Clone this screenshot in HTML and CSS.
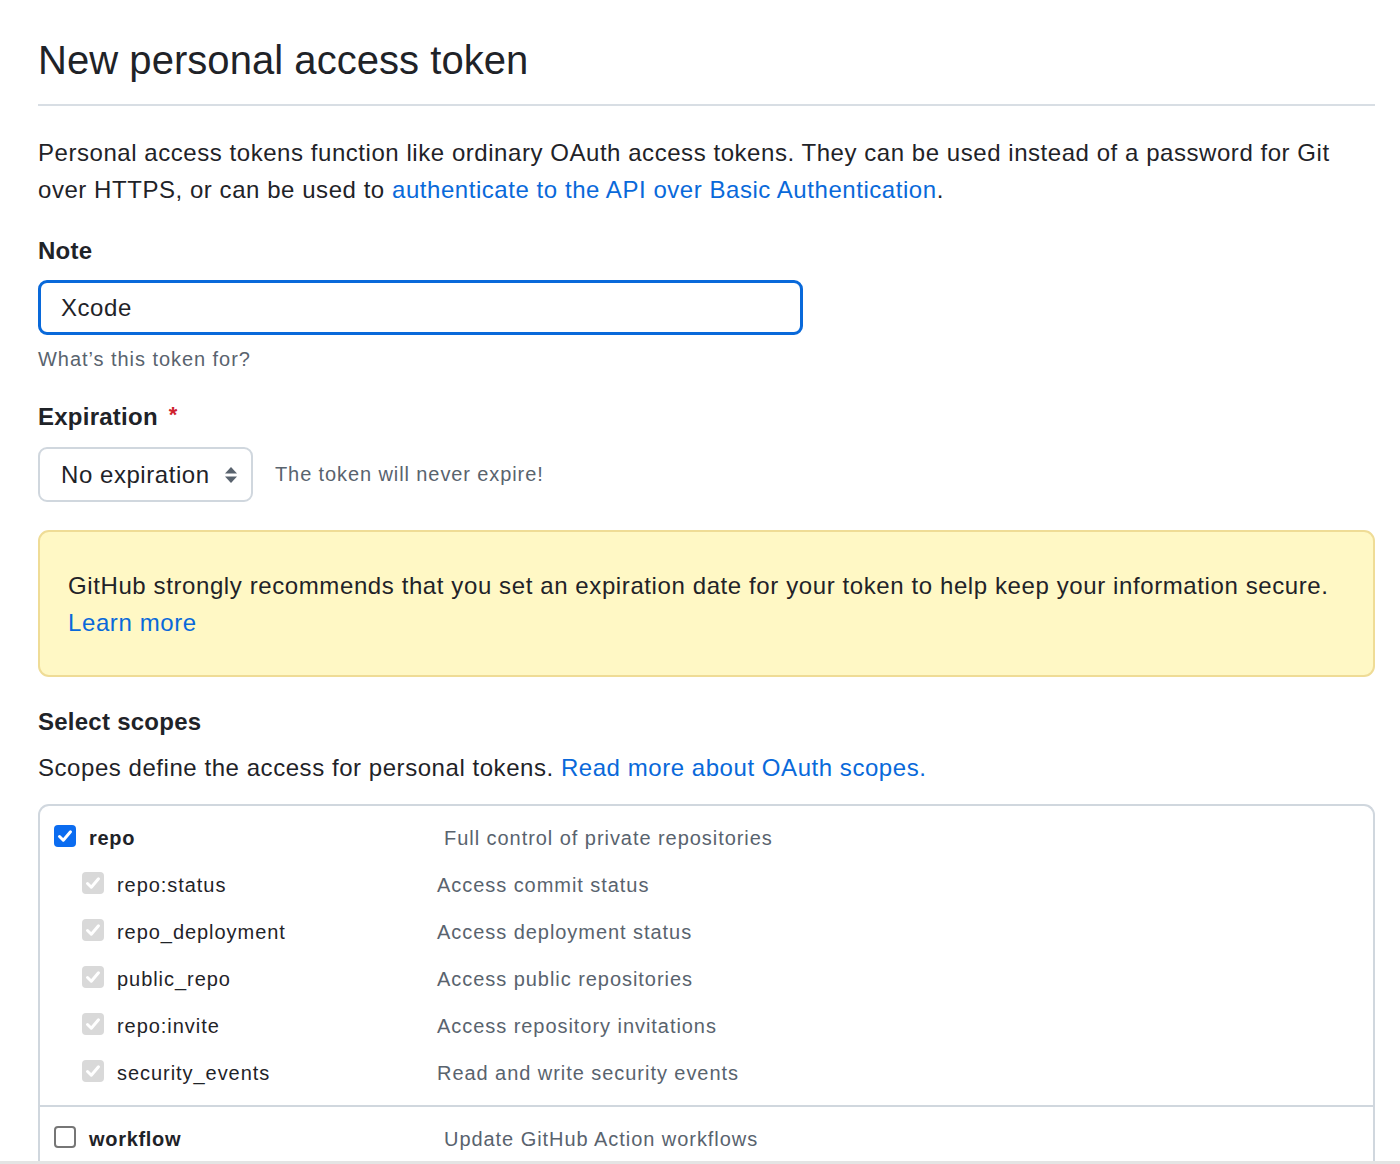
FILE: index.html
```html
<!DOCTYPE html>
<html lang="en">
<head>
<meta charset="utf-8">
<title>New personal access token</title>
<link rel="stylesheet" href="styles.css">
</head>
<body>
<div class="page">
  <h1 class="title">New personal access token</h1>
  <p class="intro">Personal access tokens function like ordinary OAuth access tokens. They can be used instead of a password for Git over HTTPS, or can be used to <a href="#" class="link">authenticate to the API over Basic Authentication</a>.</p>

  <div class="field">
    <label class="label">Note</label>
    <div class="input">Xcode</div>
    <p class="hint">What’s this token for?</p>
  </div>

  <div class="field">
    <label class="label">Expiration <span class="req">*</span></label>
    <div class="exp-row">
      <div class="select">
        <span>No expiration</span>
        <svg class="updown" width="14" height="18" viewBox="0 0 14 18"><path d="M7 1 L13 7.5 H1 Z" fill="#59636e"/><path d="M7 17 L13 10.5 H1 Z" fill="#59636e"/></svg>
      </div>
      <span class="exp-note">The token will never expire!</span>
    </div>
  </div>

  <div class="flash">
    GitHub strongly recommends that you set an expiration date for your token to help keep your information secure.<br>
    <a href="#" class="link">Learn more</a>
  </div>

  <h2 class="label scopes-title">Select scopes</h2>
  <p class="scopes-intro">Scopes define the access for personal tokens. <a href="#" class="link">Read more about OAuth scopes.</a></p>

  <div class="scopes">
    <div class="group">
      <div class="row top">
        <span class="cb checked"><svg width="22" height="22" viewBox="0 0 22 22"><path d="M5.5 11.5 L9.3 15.2 L16.5 6.8" fill="none" stroke="#fff" stroke-width="3" stroke-linecap="round" stroke-linejoin="round"/></svg></span>
        <span class="name bold">repo</span>
        <span class="desc">Full control of private repositories</span>
      </div>
      <div class="row sub">
        <span class="cb disabled"><svg width="22" height="22" viewBox="0 0 22 22"><path d="M5.5 11.5 L9.3 15.2 L16.5 6.8" fill="none" stroke="#fff" stroke-width="3" stroke-linecap="round" stroke-linejoin="round"/></svg></span>
        <span class="name">repo:status</span>
        <span class="desc">Access commit status</span>
      </div>
      <div class="row sub">
        <span class="cb disabled"><svg width="22" height="22" viewBox="0 0 22 22"><path d="M5.5 11.5 L9.3 15.2 L16.5 6.8" fill="none" stroke="#fff" stroke-width="3" stroke-linecap="round" stroke-linejoin="round"/></svg></span>
        <span class="name">repo_deployment</span>
        <span class="desc">Access deployment status</span>
      </div>
      <div class="row sub">
        <span class="cb disabled"><svg width="22" height="22" viewBox="0 0 22 22"><path d="M5.5 11.5 L9.3 15.2 L16.5 6.8" fill="none" stroke="#fff" stroke-width="3" stroke-linecap="round" stroke-linejoin="round"/></svg></span>
        <span class="name">public_repo</span>
        <span class="desc">Access public repositories</span>
      </div>
      <div class="row sub">
        <span class="cb disabled"><svg width="22" height="22" viewBox="0 0 22 22"><path d="M5.5 11.5 L9.3 15.2 L16.5 6.8" fill="none" stroke="#fff" stroke-width="3" stroke-linecap="round" stroke-linejoin="round"/></svg></span>
        <span class="name">repo:invite</span>
        <span class="desc">Access repository invitations</span>
      </div>
      <div class="row sub">
        <span class="cb disabled"><svg width="22" height="22" viewBox="0 0 22 22"><path d="M5.5 11.5 L9.3 15.2 L16.5 6.8" fill="none" stroke="#fff" stroke-width="3" stroke-linecap="round" stroke-linejoin="round"/></svg></span>
        <span class="name">security_events</span>
        <span class="desc">Read and write security events</span>
      </div>
    </div>
    <div class="group">
      <div class="row top">
        <span class="cb empty"></span>
        <span class="name bold">workflow</span>
        <span class="desc">Update GitHub Action workflows</span>
      </div>
    </div>
  </div>
</div>
<div class="fold"></div>
</body>
</html>
```

FILE: styles.css
```css
html, body {
  margin: 0;
  padding: 0;
  background: #ffffff;
}
body {
  font-family: "Liberation Sans", Arial, sans-serif;
  color: #1f2328;
  height: 1164px;
  overflow: hidden;
}
.page {
  padding: 35px 25px 0 38px;
}
.title {
  margin: 0;
  font-size: 40px;
  font-weight: 400;
  line-height: 50px;
  padding-bottom: 19px;
  border-bottom: 2px solid #d8dee4;
  letter-spacing: 0.05px;
}
.intro {
  margin: 28px 0 0;
  font-size: 24px;
  line-height: 37px;
  letter-spacing: 0.55px;
}
.link {
  color: #0969da;
  text-decoration: none;
}
.field {
  margin-top: 28px;
}
.field + .field {
  margin-top: 29px;
}
.label {
  display: block;
  margin: 0;
  font-size: 24px;
  font-weight: 700;
  line-height: 30px;
  letter-spacing: 0.25px;
}
.req {
  color: #cf222e;
  font-size: 22px;
  margin-left: 4px;
  position: relative;
  top: -3px;
}
.input {
  margin-top: 14px;
  box-sizing: border-box;
  width: 765px;
  height: 55px;
  border: 3px solid #0969da;
  border-radius: 9px;
  padding: 0 19px 0 20px;
  font-size: 24px;
  line-height: 49px;
  color: #1f2328;
  letter-spacing: 0.55px;
}
.hint {
  margin: 10px 0 0;
  font-size: 20px;
  line-height: 28px;
  color: #59636e;
  letter-spacing: 0.95px;
}
.exp-row {
  margin-top: 14px;
  display: flex;
  align-items: center;
  gap: 22px;
}
.select {
  box-sizing: border-box;
  width: 215px;
  height: 55px;
  border: 2px solid #d0d7de;
  border-radius: 9px;
  padding: 0 13px 0 21px;
  display: flex;
  align-items: center;
  justify-content: space-between;
  font-size: 24px;
  letter-spacing: 0.55px;
}
.updown {
  display: block;
}
.exp-note {
  font-size: 20px;
  color: #59636e;
  letter-spacing: 0.9px;
}
.flash {
  margin-top: 28px;
  background: #fff8c5;
  border: 2px solid #efdc96;
  border-radius: 11px;
  padding: 35px 27px 34px 28px;
  font-size: 24px;
  line-height: 37px;
  color: #1f2328;
  letter-spacing: 0.6px;
}
.scopes-title {
  margin-top: 30px;
}
.scopes-intro {
  margin: 12px 0 0;
  font-size: 24px;
  line-height: 37px;
  letter-spacing: 0.55px;
}
.scopes {
  margin-top: 18px;
  border: 2px solid #d0d7de;
  border-bottom: none;
  border-radius: 11px 11px 0 0;
}
.group {
  padding: 9px 0 8px;
}
.group + .group {
  border-top: 2px solid #d0d7de;
  padding-bottom: 0;
}
.row {
  display: flex;
  align-items: center;
  height: 47px;
  font-size: 20px;
  letter-spacing: 0.95px;
}
.row.top {
  padding-left: 14px;
}
.row.sub {
  padding-left: 42px;
}
.cb {
  box-sizing: border-box;
  width: 22px;
  height: 22px;
  border-radius: 4px;
  flex: none;
  margin-right: 13px;
  position: relative;
  top: -3px;
}
.cb svg {
  display: block;
}
.cb.checked {
  background: #0b6cf0;
}
.cb.disabled {
  background: #d9d9d9;
}
.cb.empty {
  border: 2px solid #767676;
  background: #fff;
}
.name {
  color: #1f2328;
}
.bold {
  font-weight: 700;
  letter-spacing: 0.7px;
}
.top .name {
  width: 355px;
}
.sub .name {
  width: 320px;
}
.desc {
  color: #59636e;
  letter-spacing: 0.95px;
}
.fold {
  position: fixed;
  left: 0;
  right: 0;
  bottom: 0;
  height: 3px;
  background: #e4e4e4;
}
```
